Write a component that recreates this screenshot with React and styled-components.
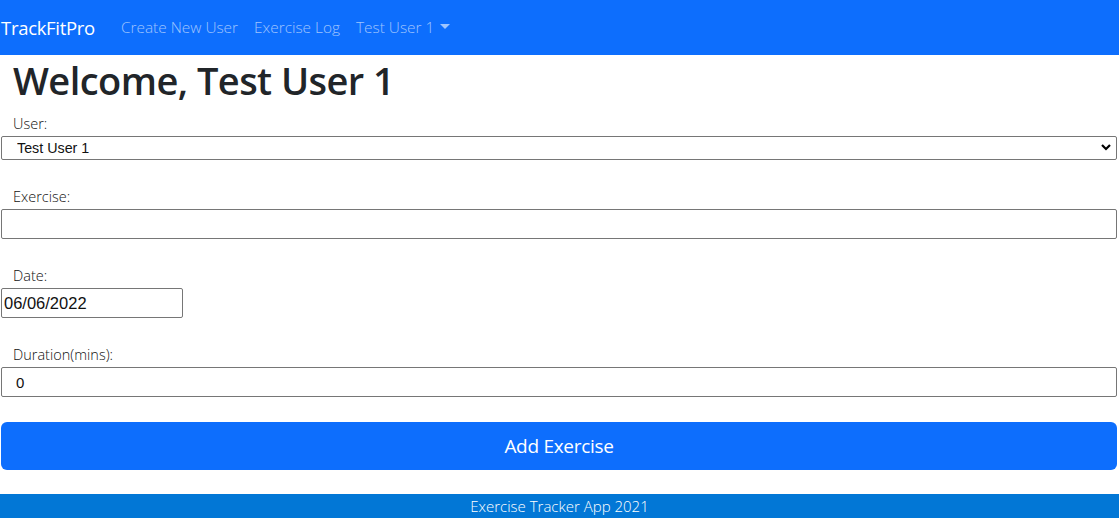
import React from "react";
import styled, { createGlobalStyle } from "styled-components";

const GlobalStyle = createGlobalStyle`
  html, body { margin: 0; padding: 0; background: #fff; }
  body {
    font-family: "Open Sans", "Noto Sans", sans-serif;
    color: #212529;
  }
  * { box-sizing: border-box; }
`;

const Navbar = styled.nav`
  display: flex;
  align-items: center;
  height: 55px;
  background: #0d6efd;
  padding: 0 0 0 1px;
`;

const Brand = styled.a`
  font-size: 18.5px;
  color: #fff;
  margin-right: 18px;
  text-decoration: none;
  letter-spacing: -0.3px;
`;

const NavLink = styled.a`
  display: flex;
  align-items: center;
  gap: 6px;
  padding: 8px 8px;
  font-size: 15.4px;
  font-weight: 300;
  color: rgba(255, 255, 255, 0.6);
  text-decoration: none;
`;

const Caret = styled.span`
  display: inline-block;
  width: 0;
  height: 0;
  border-top: 5px solid rgba(255, 255, 255, 0.6);
  border-left: 5px solid transparent;
  border-right: 5px solid transparent;
  margin-top: -2px;
`;

const Main = styled.main`
  display: flex;
  flex-direction: column;
  padding: 1px 2px 0 1px;
`;

const Title = styled.h1`
  margin: 0 0 8px;
  padding-left: 12px;
  font-size: 38px;
  line-height: 48px;
  font-weight: 600;
  letter-spacing: -0.55px;
  color: #212529;
`;

const Form = styled.form`
  display: flex;
  flex-direction: column;
  gap: 25px;
`;

const Group = styled.div`
  display: flex;
  flex-direction: column;
`;

const Label = styled.label`
  padding-left: 12px;
  font-size: 14.5px;
  font-weight: 300;
  line-height: 23px;
  padding-bottom: 1px;
  color: #111;
`;

const SelectWrap = styled.div`
  position: relative;
  display: flex;
`;

const Select = styled.select`
  appearance: none;
  width: 100%;
  height: 24px;
  border: 1px solid #767676;
  border-radius: 2px;
  background: #fff;
  padding: 0 0 0 15px;
  font-family: "Liberation Sans", Arial, sans-serif;
  font-size: 14.3px;
  color: #111;
`;

const Chevron = styled.svg`
  position: absolute;
  right: 6px;
  top: 7px;
  pointer-events: none;
`;

const Input = styled.input`
  width: ${(p) => p.$width || "100%"};
  height: 30px;
  border: 1px solid #767676;
  border-radius: 2px;
  padding: 0 0 0 ${(p) => p.$pad || 2}px;
  font-family: "Liberation Sans", Arial, sans-serif;
  font-size: ${(p) => p.$size || 15}px;
  color: #111;
  background: #fff;
`;

const SubmitButton = styled.button`
  width: 100%;
  height: 48px;
  border: none;
  border-radius: 6px;
  background: #0d6efd;
  color: #fff;
  font-family: "Open Sans", "Noto Sans", sans-serif;
  font-size: 19px;
  font-weight: 400;
  letter-spacing: -0.3px;
  cursor: pointer;
`;

const Footer = styled.footer`
  margin-top: 24px;
  height: 24px;
  background: #0277d6;
  color: #fff;
  display: flex;
  align-items: center;
  justify-content: center;
  font-size: 15px;
  font-weight: 300;
`;

export default function App() {
  return (
    <>
      <GlobalStyle />
      <Navbar>
        <Brand href="#">TrackFitPro</Brand>
        <NavLink href="#">Create New User</NavLink>
        <NavLink href="#">Exercise Log</NavLink>
        <NavLink href="#">
          Test User 1 <Caret />
        </NavLink>
      </Navbar>
      <Main>
        <Title>Welcome, Test User 1</Title>
        <Form onSubmit={(e) => e.preventDefault()}>
          <Group>
            <Label>User:</Label>
            <SelectWrap>
              <Select defaultValue="Test User 1">
                <option>Test User 1</option>
              </Select>
              <Chevron width="10" height="8" viewBox="0 0 10 8">
                <path d="M1 2 L5 6 L9 2" stroke="#000" strokeWidth="2.2" fill="none" />
              </Chevron>
            </SelectWrap>
          </Group>
          <Group>
            <Label>Exercise:</Label>
            <Input type="text" defaultValue="" />
          </Group>
          <Group>
            <Label>Date:</Label>
            <Input type="text" defaultValue="06/06/2022" $width="182px" $size={16.5} />
          </Group>
          <Group>
            <Label>Duration(mins):</Label>
            <Input type="text" defaultValue="0" $pad={14} />
          </Group>
          <SubmitButton type="submit">Add Exercise</SubmitButton>
        </Form>
      </Main>
      <Footer>Exercise Tracker App 2021</Footer>
    </>
  );
}
